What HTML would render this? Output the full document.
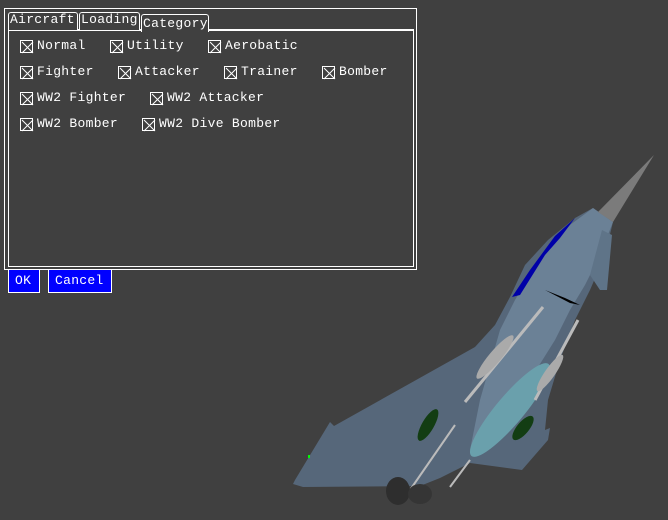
<!DOCTYPE html>
<html><head><style>
body{margin:0;width:668px;height:520px;background:#404040;overflow:hidden;position:relative;font-family:"Liberation Mono",monospace;color:#fff;font-size:13px}
.b{position:absolute;box-sizing:border-box}
.t{position:absolute;white-space:nowrap;letter-spacing:0.3px;line-height:14px}
.cb{position:absolute;width:13px;height:13px;box-sizing:border-box;border:1px solid #fff}
.cb svg{position:absolute;left:0;top:0}
</style></head><body>
<div class="b" style="left:4px;top:8px;width:413px;height:262px;border:1px solid #fff"></div>
<div class="b" style="left:8px;top:29px;width:406px;height:238px;border:1px solid #fff;border-top:2px solid #fff"></div>
<div class="b" style="left:8px;top:12px;width:70px;height:18px;border:1px solid #fff;border-bottom:none;border-radius:3px 3px 0 0;background:#404040"></div>
<div class="t" style="left:10px;top:13px">Aircraft</div>
<div class="b" style="left:79px;top:12px;width:61px;height:18px;border:1px solid #fff;border-bottom:none;border-radius:3px 3px 0 0;background:#404040"></div>
<div class="t" style="left:81px;top:13px">Loading</div>
<div class="b" style="left:141px;top:14px;width:68px;height:18px;border:1px solid #fff;border-bottom:none;border-radius:3px 3px 0 0;background:#404040"></div>
<div class="t" style="left:143px;top:17px">Category</div>

<svg width="0" height="0" style="position:absolute"><defs><symbol id="x" viewBox="0 0 13 13"><path d="M1 1L12 12M12 1L1 12" stroke="#fff" stroke-width="1"/></symbol></defs></svg>

<div class="cb" style="left:20px;top:40px"><svg width="13" height="13"><use href="#x"/></svg></div><div class="t" style="left:37px;top:39px">Normal</div>
<div class="cb" style="left:110px;top:40px"><svg width="13" height="13"><use href="#x"/></svg></div><div class="t" style="left:127px;top:39px">Utility</div>
<div class="cb" style="left:208px;top:40px"><svg width="13" height="13"><use href="#x"/></svg></div><div class="t" style="left:225px;top:39px">Aerobatic</div>

<div class="cb" style="left:20px;top:66px"><svg width="13" height="13"><use href="#x"/></svg></div><div class="t" style="left:37px;top:65px">Fighter</div>
<div class="cb" style="left:118px;top:66px"><svg width="13" height="13"><use href="#x"/></svg></div><div class="t" style="left:135px;top:65px">Attacker</div>
<div class="cb" style="left:224px;top:66px"><svg width="13" height="13"><use href="#x"/></svg></div><div class="t" style="left:241px;top:65px">Trainer</div>
<div class="cb" style="left:322px;top:66px"><svg width="13" height="13"><use href="#x"/></svg></div><div class="t" style="left:339px;top:65px">Bomber</div>

<div class="cb" style="left:20px;top:92px"><svg width="13" height="13"><use href="#x"/></svg></div><div class="t" style="left:37px;top:91px">WW2 Fighter</div>
<div class="cb" style="left:150px;top:92px"><svg width="13" height="13"><use href="#x"/></svg></div><div class="t" style="left:167px;top:91px">WW2 Attacker</div>

<div class="cb" style="left:20px;top:118px"><svg width="13" height="13"><use href="#x"/></svg></div><div class="t" style="left:37px;top:117px">WW2 Bomber</div>
<div class="cb" style="left:142px;top:118px"><svg width="13" height="13"><use href="#x"/></svg></div><div class="t" style="left:159px;top:117px">WW2 Dive Bomber</div>

<div class="b" style="left:8px;top:269px;width:32px;height:24px;background:#0000ff;border:1px solid #fff"></div><div class="t" style="left:15px;top:274px">OK</div>
<div class="b" style="left:48px;top:269px;width:64px;height:24px;background:#0000ff;border:1px solid #fff"></div><div class="t" style="left:55px;top:274px">Cancel</div>

<svg class="b" style="left:0;top:0" width="668" height="520">
<!-- main wing/body -->
<polygon fill="#56677a" points="593,208 613,222 605,255 590,290 575,320 560,360 548,400 545,430 550,428 548,440 522,470 470,463 440,478 420,486 303,487 293,484 295,480 330,422 334,426 475,347 495,325 510,297 525,265 548,240 575,218"/>
<polygon fill="#6b8196" points="593,208 613,222 600,255 585,285 570,310 555,340 530,380 505,420 470,450 480,400 500,330 515,300 530,275 550,245 570,225"/>
<polygon fill="#5f7488" points="602,230 612,235 607,290 600,290 590,275"/>
<!-- nose -->
<polygon fill="#7b7b7b" points="654,155 613,222 598,212"/>
<!-- canopy -->
<polygon fill="#0000a8" points="575,218 555,236 530,270 512,297 520,295 545,255 560,238"/>
<!-- black -->
<polygon fill="#000" points="545,290 570,303 580,305 565,298"/>
<!-- tank -->
<ellipse cx="510" cy="410" rx="14" ry="60" transform="rotate(40 510 410)" fill="#6aa0ac"/>
<!-- missiles -->
<line x1="543" y1="307" x2="465" y2="402" stroke="#bbb" stroke-width="3"/>
<ellipse cx="495" cy="357" rx="6" ry="28" transform="rotate(40 495 357)" fill="#aaa"/>
<line x1="578" y1="320" x2="535" y2="400" stroke="#bbb" stroke-width="3"/>
<ellipse cx="550" cy="373" rx="5" ry="22" transform="rotate(35 550 373)" fill="#aaa"/>
<line x1="455" y1="425" x2="410" y2="490" stroke="#bbb" stroke-width="2"/>
<line x1="470" y1="460" x2="450" y2="487" stroke="#bbb" stroke-width="2"/>
<!-- bombs -->
<ellipse cx="428" cy="425" rx="6" ry="18" transform="rotate(30 428 425)" fill="#133d13"/>
<ellipse cx="523" cy="428" rx="6" ry="15" transform="rotate(40 523 428)" fill="#133d13"/>
<!-- engines -->
<ellipse cx="398" cy="491" rx="12" ry="14" fill="#2e2e2e"/>
<ellipse cx="420" cy="494" rx="12" ry="10" fill="#353535"/>
<rect x="308" y="455" width="2" height="3" fill="#0f0"/>
</svg>
</body></html>
